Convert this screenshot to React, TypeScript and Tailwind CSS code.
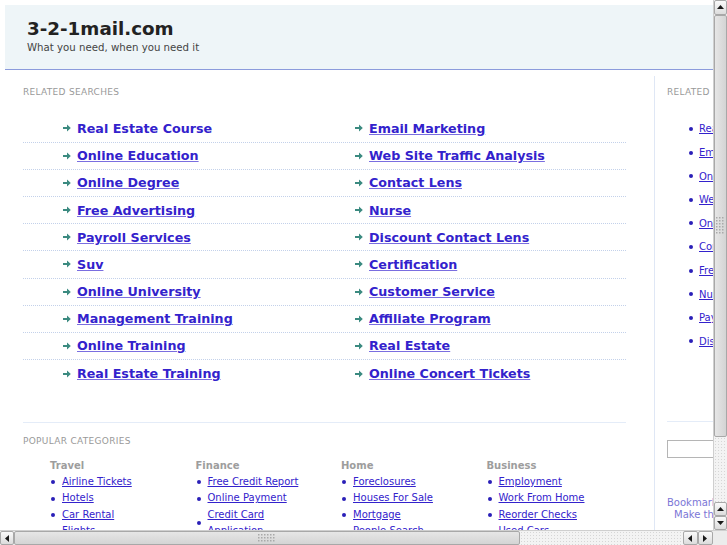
const related: [string, string][] = [
  ["Real Estate Course", "Email Marketing"],
  ["Online Education", "Web Site Traffic Analysis"],
  ["Online Degree", "Contact Lens"],
  ["Free Advertising", "Nurse"],
  ["Payroll Services", "Discount Contact Lens"],
  ["Suv", "Certification"],
  ["Online University", "Customer Service"],
  ["Management Training", "Affiliate Program"],
  ["Online Training", "Real Estate"],
  ["Real Estate Training", "Online Concert Tickets"],
];

const sideLinks = [
  "Real Estate Course",
  "Email Marketing",
  "Online Education",
  "Web Site Traffic Analysis",
  "Online Degree",
  "Contact Lens",
  "Free Advertising",
  "Nurse",
  "Payroll Services",
  "Discount Contact Lens",
];

const categories: { title: string; items: string[] }[] = [
  { title: "Travel", items: ["Airline Tickets", "Hotels", "Car Rental", "Flights"] },
  { title: "Finance", items: ["Free Credit Report", "Online Payment", "Credit Card Application", "Insurance"] },
  { title: "Home", items: ["Foreclosures", "Houses For Sale", "Mortgage", "People Search"] },
  { title: "Business", items: ["Employment", "Work From Home", "Reorder Checks", "Used Cars"] },
];

function Arrow() {
  return (
    <svg width="8" height="8" viewBox="0 0 8 8" className="shrink-0">
      <path d="M0 3h4V0.5L7.8 4 4 7.5V5H0z" fill="#3b8a80" />
    </svg>
  );
}

function Bullet() {
  return <span className="inline-block w-[4px] h-[4px] rounded-full bg-[#2a1fb8] shrink-0" />;
}

function Tri({ dir }: { dir: "up" | "down" | "left" | "right" }) {
  const pts = {
    up: "1,6 4.5,2 8,6",
    down: "1,2 4.5,6 8,2",
    left: "6,1 2,4.5 6,8",
    right: "2,1 6,4.5 2,8",
  }[dir];
  return (
    <svg width="9" height="9" viewBox="0 0 9 9">
      <polygon points={pts} fill="#1a1a1a" />
    </svg>
  );
}

function Btn({ dir, className }: { dir: "up" | "down" | "left" | "right"; className: string }) {
  return (
    <div
      className={`flex items-center justify-center border border-[#a8a8a8] rounded-[2px] bg-gradient-to-b from-[#fafafa] to-[#dcdcdc] ${className}`}
    >
      <Tri dir={dir} />
    </div>
  );
}

function Grip({ vertical }: { vertical: boolean }) {
  const cols = vertical ? 3 : 6;
  const rows = vertical ? 6 : 3;
  return (
    <svg width={cols * 3} height={rows * 3} viewBox={`0 0 ${cols * 3} ${rows * 3}`}>
      {Array.from({ length: cols * rows }).map((_, i) => (
        <rect key={i} x={(i % cols) * 3} y={Math.floor(i / cols) * 3} width="1.5" height="1.5" fill="#a9a9a9" />
      ))}
    </svg>
  );
}

const track =
  "bg-[#f3f3f3] bg-[radial-gradient(#d6d6d6_0.6px,transparent_0.7px)] bg-[length:3px_3px]";

export default function App() {
  return (
    <div className="w-[727px] h-[545px] flex flex-col overflow-hidden bg-white font-['DejaVu_Sans','Liberation_Sans',sans-serif]">
      <div className="flex flex-1 min-h-0">
        <div className="flex-1 overflow-hidden">
          <div className="w-[900px] p-[5px]">
            <header className="h-[65px] bg-[#eef5f8] border-b border-[#8b9bdc] pl-[22px] pt-[13px]">
              <h1 className="text-[18.3px] leading-[22px] font-bold text-[#222]">3-2-1mail.com</h1>
              <p className="mt-[1px] text-[10.2px] leading-[14px] text-[#444]">What you need, when you need it</p>
            </header>

            <div className="flex mt-[6px]">
              <main className="w-[650px] border-r border-[#dfe7f5] pl-[18px] pr-[28px] pt-[10px]">
                <h2 className="text-[9px] leading-[12px] tracking-[0.3px] text-[#999]">RELATED SEARCHES</h2>
                <ul className="mt-[17.4px]">
                  {related.map(([a, b], i) => (
                    <li
                      key={a}
                      className={`flex h-[27.2px] box-border ${i < related.length - 1 ? "border-b border-dotted border-[#c3d1ea]" : ""}`}
                    >
                      <div className="w-[302px] pl-[40px] flex items-center gap-[6px]">
                        <Arrow />
                        <a
                          href="#"
                          className={`text-[12.7px] font-bold text-[#3322cc] ${i === 0 ? "no-underline" : "underline"} decoration-[#7a6ee0]`}
                        >
                          {a}
                        </a>
                      </div>
                      <div className="flex-1 pl-[30px] flex items-center gap-[6px]">
                        <Arrow />
                        <a href="#" className="text-[12.7px] font-bold text-[#3322cc] underline decoration-[#7a6ee0]">
                          {b}
                        </a>
                      </div>
                    </li>
                  ))}
                </ul>

                <div className="mt-[34.6px] border-t border-[#e4ecf8]" />
                <h2 className="mt-[12px] text-[9px] leading-[12px] tracking-[0.3px] text-[#999]">POPULAR CATEGORIES</h2>
                <div className="mt-[12.5px] pl-[27px] flex">
                  {categories.map((c) => (
                    <div key={c.title} className="w-[145.5px] shrink-0">
                      <h3 className="text-[10px] leading-[13px] font-bold text-[#9d9d9d]">{c.title}</h3>
                      <ul className="mt-[1.5px] w-[118px]">
                        {c.items.map((it) => (
                          <li key={it} className="flex items-center gap-[7px] pl-[1px] text-[10px] leading-[16.5px]">
                            <Bullet />
                            <a href="#" className="text-[#3322cc] underline">
                              {it}
                            </a>
                          </li>
                        ))}
                      </ul>
                    </div>
                  ))}
                </div>
              </main>

              <aside className="w-[240px] pl-[12px] pt-[10px]">
                <h2 className="text-[9px] leading-[12px] tracking-[0.3px] text-[#999]">RELATED SEARCHES</h2>
                <ul className="mt-[19.2px] pl-[22px]">
                  {sideLinks.map((s) => (
                    <li key={s} className="flex items-center gap-[6px] h-[23.6px] text-[10px]">
                      <Bullet />
                      <a href="#" className="text-[#3322cc] underline">
                        {s}
                      </a>
                    </li>
                  ))}
                </ul>
                <div className="mt-[68px] border-t border-[#e4ecf8]" />
                <input type="text" className="mt-[18px] block w-[150px] h-[18px] border border-[#b5b5b5] bg-white" />
                <p className="mt-[39px] text-[10px] leading-[12px] text-[#7b76d6]">Bookmark this page</p>
                <p className="pl-[7px] text-[10px] leading-[12px] text-[#7b76d6]">Make this your homepage</p>
              </aside>
            </div>
          </div>
        </div>

        <div className="w-[14px] flex flex-col bg-[#efefef] border-l border-[#cfcfcf]">
          <Btn dir="up" className="h-[15px]" />
          <div className="h-[422px] border border-[#a8a8a8] rounded-[2px] bg-gradient-to-r from-[#e6e6e6] to-[#d4d4d4] flex items-center justify-center">
            <Grip vertical />
          </div>
          <div className={`flex-1 ${track}`} />
          <Btn dir="up" className="h-[14px]" />
          <Btn dir="down" className="h-[14px]" />
        </div>
      </div>

      <div className="h-[15px] flex bg-[#efefef] border-t border-[#cfcfcf]">
        <Btn dir="left" className="w-[14px]" />
        <div className="w-[506px] border border-[#a8a8a8] rounded-[2px] bg-gradient-to-b from-[#e6e6e6] to-[#d4d4d4] flex items-center justify-center">
          <Grip vertical={false} />
        </div>
        <div className={`flex-1 ${track}`} />
        <Btn dir="left" className="w-[15px]" />
        <Btn dir="right" className="w-[15px]" />
        <div className="w-[14px] bg-[#ececec]" />
      </div>
    </div>
  );
}
